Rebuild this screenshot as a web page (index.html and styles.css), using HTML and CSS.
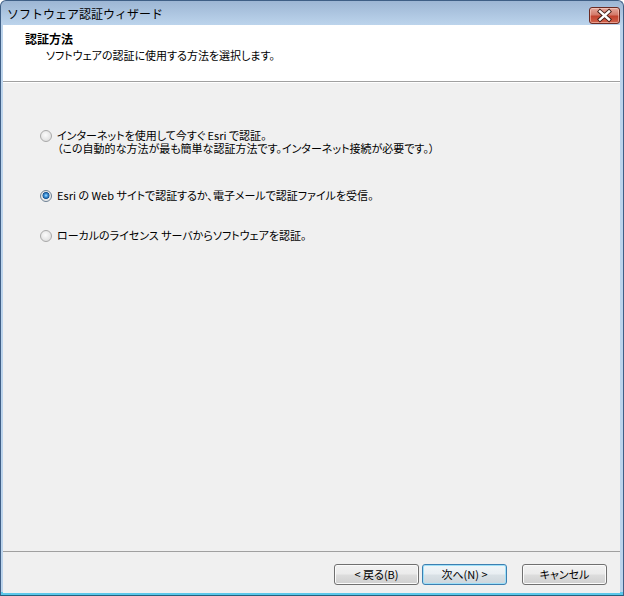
FILE: index.html
```html
<!DOCTYPE html>
<html lang="ja">
<head>
    <meta charset="UTF-8">
    <title>ソフトウェア認証ウィザード</title>
    <link rel="stylesheet" href="styles.css">
</head>
<body>
    <div class="window">
        <div class="titlebar">
            <span class="title">ソフトウェア認証ウィザード</span>
            <button class="close" aria-label="閉じる">
                <svg width="31" height="17" viewBox="0 0 31 17">
                    <path d="M11 4.5 L20 12.5 M20 4.5 L11 12.5" stroke="#3d1a14" stroke-width="4.2" stroke-linecap="square" fill="none"/>
                    <path d="M11 4.5 L20 12.5 M20 4.5 L11 12.5" stroke="#ffffff" stroke-width="2.4" stroke-linecap="square" fill="none"/>
                </svg>
            </button>
        </div>
        <div class="client">
            <div class="header">
                <div class="header-title">認証方法</div>
                <div class="header-desc">ソフトウェアの認証に使用する方法を選択します。</div>
            </div>
            <div class="content">
                <label class="option first">
                    <input type="radio" name="method">
                    <span>インターネットを使用して今すぐ Esri で認証。<br>（この自動的な方法が最も簡単な認証方法です。インターネット接続が必要です。）</span>
                </label>
                <label class="option second">
                    <input type="radio" name="method" checked>
                    <span>Esri の Web サイトで認証するか、電子メールで認証ファイルを受信。</span>
                </label>
                <label class="option third">
                    <input type="radio" name="method">
                    <span>ローカルのライセンス サーバからソフトウェアを認証。</span>
                </label>
            </div>
            <div class="footer">
                <button class="btn">&lt; 戻る(B)</button>
                <button class="btn default">次へ(N) &gt;</button>
                <button class="btn cancel">キャンセル</button>
            </div>
        </div>
    </div>
</body>
</html>
```

FILE: styles.css
```css
body {
    margin: 0;
    font-family: "Noto Sans CJK JP", "Noto Sans", sans-serif;
    font-size: 11px;
    color: #000;
}
.window {
    width: 624px;
    height: 596px;
    box-sizing: border-box;
    display: flex;
    flex-direction: column;
    border: 1px solid #3f5f86;
    border-bottom-color: #245f7c;
    border-radius: 6px 6px 0 0;
    background: linear-gradient(#9db6d4, #bcd4ec 24px, #bcd4ec calc(100% - 3px), #5cc8ea calc(100% - 3px));
}
.titlebar {
    height: 24px;
    display: flex;
    align-items: center;
    justify-content: space-between;
    padding: 0 3px 0 6px;
}
.title {
    font-size: 12px;
    line-height: 14px;
    color: #000;
    margin-top: 1px;
}
.close {
    width: 31px;
    height: 17px;
    padding: 0;
    margin-top: 4px;
    border: 1px solid #6b2a22;
    border-radius: 3px;
    background: linear-gradient(#e4a89c, #d47a6a 45%, #c2422e 55%, #d0624c);
    box-shadow: inset 0 0 0 1px rgba(255, 220, 210, 0.5);
    display: flex;
    align-items: center;
    justify-content: center;
}
.close svg {
    display: block;
    margin: -1px;
}
.client {
    flex: 1;
    margin: 0 3px 2px 2px;
    display: flex;
    flex-direction: column;
    background: #f0f0f0;
}
.header {
    height: 57px;
    box-sizing: border-box;
    background: #fff;
    padding: 7px 0 0 22px;
    border-bottom: 1px solid #a0a0a0;
}
.header-title {
    font-size: 12px;
    font-weight: bold;
    line-height: 14px;
}
.header-desc {
    margin: 3px 0 0 21px;
    line-height: 13px;
    font-feature-settings: "palt";
}
.content {
    flex: 1;
    padding: 46px 0 0 37px;
    border-top: 1px solid #fff;
}
.option {
    display: flex;
    align-items: flex-start;
    line-height: 13px;
    font-feature-settings: "palt";
}
.option.second {
    margin-top: 34px;
}
.option.third {
    margin-top: 27px;
}
.option input {
    appearance: none;
    -webkit-appearance: none;
    flex: none;
    width: 12px;
    height: 12px;
    margin: 1px 5px 0 0;
    box-sizing: border-box;
    border: 1px solid #a9a9a9;
    border-radius: 50%;
    background: radial-gradient(circle at 45% 40%, #fbfbfb, #e2e2e2 70%, #d0d0d0);
}
.option input:checked {
    border-color: #6d8093;
    background: radial-gradient(circle at 50% 45%, #a8dcff 0, #3f95dc 1.6px, #1a5592 3.2px, #e6e6e6 3.8px, #f4f4f4 100%);
}
.footer {
    height: 42px;
    box-sizing: border-box;
    border-top: 1px solid #a0a0a0;
    display: flex;
    justify-content: flex-end;
    align-items: flex-start;
    padding: 12px 13px 0 0;
}
.btn {
    width: 85px;
    height: 21px;
    margin-left: 3px;
    padding: 0;
    font-family: "Noto Sans CJK JP", "Noto Sans", sans-serif;
    font-size: 11px;
    line-height: 13px;
    color: #000;
    border: 1px solid #707070;
    border-radius: 3px;
    background: linear-gradient(#f2f2f2, #ebebeb 48%, #dddddd 52%, #cfcfcf);
    box-shadow: inset 0 0 0 1px #fbfbfb;
    font-feature-settings: "palt";
}
.btn.default {
    border-color: #3c7fb1;
    box-shadow: inset 0 0 0 1px #9fe0f8;
    background: linear-gradient(#f0f6f9, #e8eef2 48%, #d9e1e6 52%, #cdd6dc);
}
.btn.cancel {
    margin-left: 15px;
}
```
